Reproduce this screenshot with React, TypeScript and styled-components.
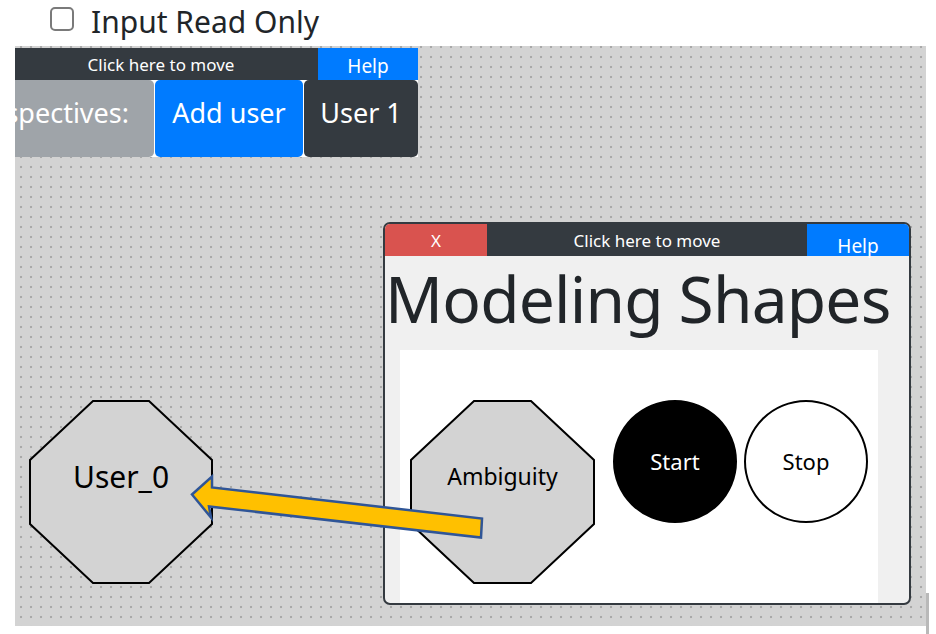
import React from "react";
import styled, { createGlobalStyle } from "styled-components";

const FONT = `"Noto Sans", "Open Sans", sans-serif`;

const GlobalStyle = createGlobalStyle`
  html, body { margin: 0; padding: 0; background: #ffffff; }
  body { font-family: ${FONT}; color: #212529; }
  * { box-sizing: border-box; }
`;

const Page = styled.div`
  width: 936px;
  height: 634px;
  overflow: hidden;
  display: flex;
  flex-direction: column;
`;

const CheckRow = styled.label`
  height: 45.5px;
  display: flex;
  align-items: flex-start;
  padding: 7px 0 0 50px;
  gap: 17px;
  font-size: 30px;
  line-height: 1;
  color: #212529;
`;

const CheckBox = styled.span`
  width: 24px;
  height: 24px;
  border: 2px solid #7a7a7a;
  border-radius: 5px;
  background: #fff;
  flex: none;
`;

const CheckText = styled.span`
  margin-top: 0px;
`;

const CanvasRow = styled.div`
  display: flex;
  align-items: flex-end;
  padding-left: 15px;
`;

const Canvas = styled.div`
  position: relative;
  width: 911px;
  height: 580px;
  overflow: hidden;
  background-color: #d3d3d3;
  background-image: radial-gradient(circle at 5px 5px, #a9a9a9 0.9px, transparent 1.6px);
  background-size: 10px 10px;
  background-position: 1px -4px;
`;

const EdgeStrip = styled.div`
  width: 3px;
  height: 41px;
  margin-bottom: -8.5px;
  background: #b9b9b9;
`;

const Win = styled.div<{ $x: number; $y: number; $w: number; $h?: number; $framed?: boolean }>`
  position: absolute;
  left: ${(p) => p.$x}px;
  top: ${(p) => p.$y}px;
  width: ${(p) => p.$w}px;
  ${(p) => (p.$h ? `height: ${p.$h}px;` : "")}
  display: flex;
  flex-direction: column;
  overflow: hidden;
  background: ${(p) => (p.$framed ? "#f0f0f0" : "#ffffff")};
  border: ${(p) => (p.$framed ? "2px solid #343a40" : "none")};
  border-radius: ${(p) => (p.$framed ? "7px" : "0")};
`;

const Header = styled.div<{ $h: number }>`
  display: flex;
  height: ${(p) => p.$h}px;
  flex: none;
  font-size: 17px;
  color: #ffffff;
`;

const HeadCell = styled.div<{ $bg: string; $w?: number; $pt?: number; $fs?: number }>`
  background: ${(p) => p.$bg};
  ${(p) => (p.$w ? `width: ${p.$w}px; flex: none;` : "flex: 1;")}
  display: flex;
  justify-content: center;
  align-items: center;
  padding-top: ${(p) => p.$pt ?? 0}px;
  font-size: ${(p) => p.$fs ?? 17}px;
  line-height: 1;
  white-space: nowrap;
`;

const ButtonRow = styled.div`
  display: flex;
  gap: 1px;
  height: 77px;
`;

const Btn = styled.div<{ $bg: string; $w: number; $end?: boolean }>`
  width: ${(p) => p.$w}px;
  flex: none;
  background: ${(p) => p.$bg};
  color: #ffffff;
  border-radius: 5px;
  display: flex;
  align-items: center;
  justify-content: ${(p) => (p.$end ? "flex-end" : "center")};
  padding: 0 ${(p) => (p.$end ? 25 : 0)}px 12px 0;
  font-size: 27px;
  line-height: 1;
  white-space: nowrap;
  overflow: hidden;
`;

const Title = styled.h1`
  margin: 0;
  padding: 5px 0 0 0;
  height: 94px;
  font-size: 64px;
  font-weight: 400;
  line-height: 1.2;
  color: #212529;
  white-space: nowrap;
  letter-spacing: -0.8px;
`;

const Palette = styled.div`
  margin-left: 15px;
  width: 478px;
  flex: 1;
  background: #ffffff;
  display: flex;
  align-items: flex-start;
  padding: 50px 0 0 10px;
`;

const Node = styled.div<{ $x?: number; $y?: number; $mr?: number }>`
  ${(p) => (p.$x !== undefined ? `position: absolute; left: ${p.$x}px; top: ${p.$y}px;` : "")}
  margin-right: ${(p) => p.$mr ?? 0}px;
  display: grid;
  flex: none;
  & > * {
    grid-area: 1 / 1;
  }
`;

const NodeLabel = styled.div<{ $fs: number; $color?: string; $pb?: number }>`
  display: flex;
  align-items: center;
  justify-content: center;
  padding-bottom: ${(p) => p.$pb ?? 0}px;
  font-size: ${(p) => p.$fs}px;
  color: ${(p) => p.$color ?? "#000"};
  line-height: 1;
  z-index: 1;
`;

const Circle = styled.div<{ $fill: string }>`
  width: 124px;
  height: 123px;
  border-radius: 50%;
  border: 2px solid #000;
  background: ${(p) => p.$fill};
`;

const ArrowLayer = styled.svg`
  position: absolute;
  left: 0;
  top: 0;
  width: 911px;
  height: 580px;
  pointer-events: none;
  z-index: 5;
`;

function Octagon({ w, h }: { w: number; h: number }) {
  const cx = 64;
  const cy = 60;
  const pts = [
    [cx, 1],
    [w - cx, 1],
    [w - 1, cy],
    [w - 1, h - cy],
    [w - cx, h - 1],
    [cx, h - 1],
    [1, h - cy],
    [1, cy],
  ]
    .map((p) => p.join(","))
    .join(" ");
  return (
    <svg width={w} height={h} viewBox={`0 0 ${w} ${h}`}>
      <polygon points={pts} fill="#d3d3d3" stroke="#000" strokeWidth="2" />
    </svg>
  );
}

export default function App() {
  return (
    <>
      <GlobalStyle />
      <Page>
        <CheckRow>
          <CheckBox />
          <CheckText>Input Read Only</CheckText>
        </CheckRow>
        <CanvasRow>
          <Canvas>
            <Win $x={-11} $y={2} $w={414}>
              <Header $h={32.5}>
                <HeadCell $bg="#343a40" $pt={2}>Click here to move</HeadCell>
                <HeadCell $bg="#007bff" $w={100} $pt={6} $fs={19}>Help</HeadCell>
              </Header>
              <ButtonRow>
                <Btn $bg="#9fa4a9" $w={150} $end>Perspectives:</Btn>
                <Btn $bg="#007bff" $w={148}>Add user</Btn>
                <Btn $bg="#343a40" $w={114}>User 1</Btn>
              </ButtonRow>
            </Win>

            <Node $x={14} $y={354.5}>
              <Octagon w={184} h={184} />
              <NodeLabel $fs={30} $pb={31}>User_0</NodeLabel>
            </Node>

            <Win $x={368} $y={176.5} $w={528} $h={383} $framed>
              <Header $h={32}>
                <HeadCell $bg="#d9534f" $w={102}>X</HeadCell>
                <HeadCell $bg="#343a40">Click here to move</HeadCell>
                <HeadCell $bg="#007bff" $w={102} $pt={12} $fs={19}>Help</HeadCell>
              </Header>
              <Title>Modeling Shapes</Title>
              <Palette>
                <Node $mr={18}>
                  <Octagon w={185} h={184} />
                  <NodeLabel $fs={23} $pb={32}>Ambiguity</NodeLabel>
                </Node>
                <Node $mr={7}>
                  <Circle $fill="#000" />
                  <NodeLabel $fs={22} $color="#fff" $pb={2}>Start</NodeLabel>
                </Node>
                <Node>
                  <Circle $fill="#fff" />
                  <NodeLabel $fs={22} $pb={2}>Stop</NodeLabel>
                </Node>
              </Palette>
            </Win>

            <ArrowLayer viewBox="15 45.5 911 580">
              <polygon
                points="192,494 212,476 212,487 482,518 481,537 209,506 211,517"
                fill="#ffc000"
                stroke="#2f5597"
                strokeWidth="2.5"
                strokeLinejoin="miter"
              />
            </ArrowLayer>
          </Canvas>
          <EdgeStrip />
        </CanvasRow>
      </Page>
    </>
  );
}
